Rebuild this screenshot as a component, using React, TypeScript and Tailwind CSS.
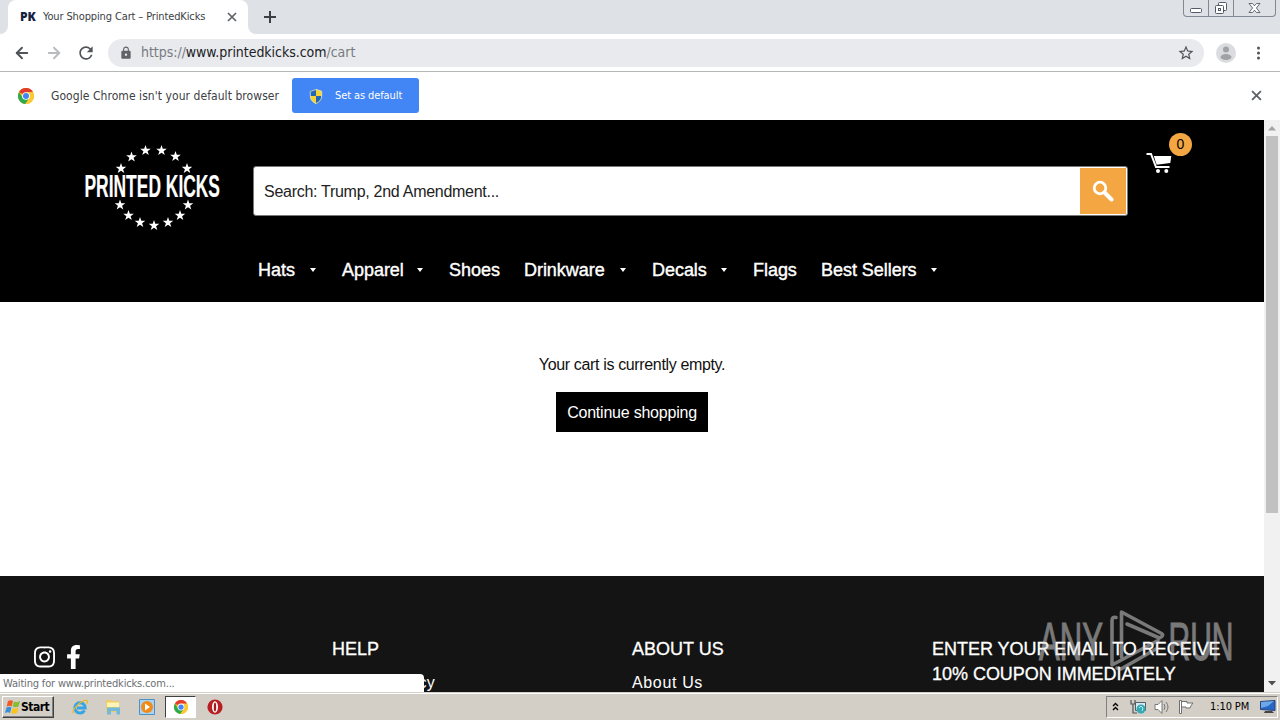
import type { ReactNode } from "react"
import { ArrowLeft, ArrowRight } from "lucide-react"
import { FaFacebookF, FaInstagram } from "react-icons/fa"
import { MdLock, MdRefresh, MdStarBorder } from "react-icons/md"

const stars = [
  [145.5, 150.5], [161.5, 150.5], [131.5, 157], [175.5, 156.5], [121, 168.5], [187, 168.5], [120, 205],
  [188, 205], [128.5, 215.5], [180, 215.5], [140, 222.5], [168, 222.5], [154, 225.5],
]

const navItems = [
  { label: "Hats", width: "w-[37px]", menu: true },
  { label: "Apparel", width: "w-[60px]", menu: true },
  { label: "Shoes", width: "w-[51px]", menu: false },
  { label: "Drinkware", width: "w-[81px]", menu: true },
  { label: "Decals", width: "w-[54px]", menu: true },
  { label: "Flags", width: "w-[44px]", menu: false },
  { label: "Best Sellers", width: "w-[95px]", menu: true },
]

function ChromeLogo({ className }: { className?: string }) {
  return (
    <svg viewBox="0 0 24 24" className={className}>
      <circle cx="12" cy="12" r="12" fill="#fbc116" />
      <path d="M12 12 1.6 6A12 12 0 0 1 22.4 6Z" fill="#e33b2e" />
      <path d="M1.6 6A12 12 0 0 0 11 24L17 14.8 12 12 7 14.8Z" fill="#2da94f" />
      <path d="M12 6h10.4A12 12 0 0 1 11 24l6.2-9Z" fill="#fcc934" />
      <circle cx="12" cy="12" r="5.8" fill="#fff" />
      <circle cx="12" cy="12" r="4.5" fill="#4285f4" />
    </svg>
  )
}

function Shield() {
  return (
    <svg viewBox="0 0 14 15" className="h-[15px] w-[14px]">
      <path d="M7 0 1 2v5c0 4 3 6.500 6 8Z" fill="#2367b5" />
      <path d="M7 0l6 2v5c0 4-3 6.500-6 8Z" fill="#f6d433" />
      <path d="M1 7h6v8C4 13.500 1 11 1 7Z" fill="#f6d433" />
      <path d="M7 7h6c0 4-3 6.500-6 8Z" fill="#2367b5" />
      <path d="M7 .5 1.300 2.400V7c0 4 2.700 6 5.700 7.500 3-1.500 5.700-3.500 5.700-7.500V2.400Z" fill="none" stroke="#d8dccb" strokeWidth=".9" />
    </svg>
  )
}

function CloseIcon({ className }: { className?: string }) {
  return (
    <svg viewBox="0 0 10 10" className={className}>
      <path d="M1 1l8 8M9 1 1 9" stroke="#5f6368" strokeWidth="1.700" />
    </svg>
  )
}

function TabStrip() {
  return (
    <div className="flex h-[34px] bg-[#dee1e6]">
      <div className="flex w-2 items-end bg-white">
        <div className="h-[34px] w-2 rounded-br-lg bg-[#dee1e6]" />
      </div>
      <div className="flex w-60 items-center rounded-t-lg bg-white pl-3">
        <span className="w-[23px] font-['Open_Sans',sans-serif] text-[12px] font-extrabold text-[#16213f]">PK</span>
        <span className="w-[181px] whitespace-nowrap text-[11px] tracking-[-0.13px] text-[#3c4043]">Your Shopping Cart – PrintedKicks</span>
        <CloseIcon className="ml-[3px] h-[10px] w-[10px]" />
      </div>
      <div className="w-2 bg-white">
        <div className="h-[34px] w-2 rounded-bl-lg bg-[#dee1e6]" />
      </div>
      <svg viewBox="0 0 12 12" className="mt-[11px] ml-2 h-3 w-3">
        <path d="M6 0v12M0 6h12" stroke="#3c4043" strokeWidth="2" />
      </svg>
      <div className="mr-1 ml-auto flex h-[17px] w-[93px] rounded-b-[4px] border border-t-0 border-[#818994]">
        <div className="w-[25px] border-r border-[#818994]">
          <svg viewBox="0 0 24 16" className="h-4 w-6">
            <rect x="6.500" y="8.500" width="11" height="4" rx="1" fill="#fff" stroke="#535b66" />
          </svg>
        </div>
        <div className="w-[25px] border-r border-[#818994]">
          <svg viewBox="0 0 24 16" className="h-4 w-6">
            <rect x="9.500" y="2.500" width="8" height="8" rx="1" fill="#fff" stroke="#535b66" />
            <rect x="6.500" y="5.500" width="8" height="8" rx="1" fill="#fff" stroke="#535b66" />
            <rect x="9.500" y="8.500" width="2" height="2" fill="#fff" stroke="#535b66" />
          </svg>
        </div>
        <svg viewBox="0 0 41 16" className="h-4 w-[41px]">
          <path d="M15 3.500h3.500l2 2.300 2-2.300H26L22.400 8l3.600 4.500h-3.500l-2-2.300-2 2.300H15L18.600 8Z" fill="#fff" stroke="#535b66" strokeWidth=".9" />
        </svg>
      </div>
    </div>
  )
}

function Toolbar() {
  return (
    <div className="flex h-[38px] items-center border-b border-[#b5b6b8] bg-white pl-[13px]">
      <ArrowLeft className="h-[18px] w-[18px] text-[#505459]" strokeWidth={2.5} />
      <ArrowRight className="ml-[14px] h-[18px] w-[18px] text-[#b9bbbe]" strokeWidth={2.5} />
      <MdRefresh className="ml-[13px] h-5 w-5 text-[#505459]" />
      <div className="ml-3 flex h-7 w-[1096px] items-center rounded-full bg-[#e8eaed] pl-[11px]">
        <MdLock className="h-[14px] w-[14px] text-[#5f6368]" />
        <span className="ml-2 whitespace-nowrap text-[14px] tracking-[-0.04px] text-[#777b80]">
          https://<span className="text-[#202124]">www.printedkicks.com</span>/cart
        </span>
        <MdStarBorder className="mr-[9px] ml-auto h-[18px] w-[18px] text-[#505459]" />
      </div>
      <svg viewBox="0 0 20 20" className="ml-3 h-5 w-5">
        <circle cx="10" cy="10" r="10" fill="#dadce0" />
        <circle cx="10" cy="6.500" r="3" fill="#a0a2a5" />
        <ellipse cx="10" cy="14" rx="5.500" ry="3" fill="#a0a2a5" />
      </svg>
      <svg viewBox="0 0 4 14" className="ml-[21px] h-[14px] w-1" fill="#505459">
        <circle cx="1.500" cy="2" r="1.500" />
        <circle cx="1.500" cy="7" r="1.500" />
        <circle cx="1.500" cy="12" r="1.500" />
      </svg>
    </div>
  )
}

function InfoBar() {
  return (
    <div className="flex h-12 items-center bg-white pb-px pl-[18px]">
      <ChromeLogo className="h-4 w-4" />
      <span className="ml-[17px] w-[241px] whitespace-nowrap text-[12px] tracking-[0.06px] text-[#3c4043]">Google Chrome isn't your default browser</span>
      <button className="flex h-[35px] w-[127px] items-center rounded-[3px] bg-[#4285f4] pt-px pl-[17px] text-[11px] tracking-[-0.1px] whitespace-nowrap text-white">
        <Shield />
        <span className="ml-3">Set as default</span>
      </button>
      <CloseIcon className="mr-[18px] ml-auto h-[11px] w-[11px]" />
    </div>
  )
}

function Logo() {
  return (
    <svg viewBox="80 140 145 95" className="mt-5 ml-20 h-[95px] w-[145px]">
      {stars.map(([x, y]) => (
        <path
          key={`${x}-${y}`}
          transform={`translate(${x} ${y})`}
          d="M0-5.500 1.300-1.800 5.300-1.700 2.100.7 3.300 4.500 0 2.200-3.300 4.500-2.100.7-5.300-1.700-1.300-1.800Z"
          fill="#fff"
        />
      ))}
      <text x="84.500" y="197" fontSize="31" fontWeight="700" textLength="135.500" lengthAdjust="spacingAndGlyphs" fill="#fff" stroke="#fff" strokeWidth=".2" className="font-['Liberation_Sans_Narrow','Liberation_Sans',sans-serif]">
        PRINTED KICKS
      </text>
    </svg>
  )
}

function ShopHeader() {
  return (
    <header className="h-[182px] bg-black font-['Liberation_Sans',Arial,sans-serif]">
      <div className="flex h-[126px]">
        <Logo />
        <div className="mt-[46px] ml-7 flex h-[50px] w-[875px] rounded-[3px] border border-[#777] bg-white">
          <span className="flex-1 pl-[10px] text-[16px] leading-[49px] tracking-[-0.28px] text-[#222]">Search: Trump, 2nd Amendment...</span>
          <button className="my-px mr-px flex w-[46px] items-center justify-center bg-[#f4a642]">
            <svg viewBox="0 0 22 22" className="h-[22px] w-[22px]" fill="none" stroke="#fff">
              <circle cx="8" cy="8" r="5.800" strokeWidth="2.800" />
              <path d="m12.500 12.500 7 7" strokeWidth="4" strokeLinecap="round" />
            </svg>
          </button>
        </div>
        <div className="relative ml-[18px] h-[60px] w-12">
          <svg viewBox="0 0 26 22" className="mt-8 h-[22px] w-[26px]" fill="#fff">
            <path d="M.500 2H5l5 13h13.500" fill="none" stroke="#fff" strokeWidth="2" />
            <path d="M7.800 4h17.500l-1 7-13.700 1.700Z" />
            <circle cx="12" cy="19" r="2" />
            <circle cx="20.300" cy="19" r="2" />
          </svg>
          <span className="absolute top-[13px] left-[23px] flex h-[23px] w-[23px] items-center justify-center rounded-full bg-[#f4a642] text-[14px] text-black">0</span>
        </div>
      </div>
      <nav className="flex pl-[258px] text-[18px] leading-[48px] tracking-[-0.04px] text-white">
        {navItems.map((item) => (
          <div key={item.label} className="mr-6 flex items-center">
            <span className={`${item.width} whitespace-nowrap [-webkit-text-stroke:0.4px_white]`}>{item.label}</span>
            {item.menu && (
              <svg viewBox="0 0 6 4" className="mr-[2px] ml-[15px] h-1 w-1.5">
                <path d="M0 0h6L3 4Z" fill="#fff" />
              </svg>
            )}
          </div>
        ))}
      </nav>
    </header>
  )
}

function Watermark() {
  return (
    <svg viewBox="1030 600 220 84" className="absolute top-[480px] left-[1030px] h-[84px] w-[220px] opacity-50">
      <g fill="#ddd" stroke="#ddd" strokeWidth="1.100" fontSize="53" className="font-['Liberation_Sans_Narrow','Liberation_Sans',sans-serif]">
        <text x="1039" y="659.500" textLength="64" lengthAdjust="spacingAndGlyphs">ANY</text>
        <text x="1168.500" y="659.500" textLength="65" lengthAdjust="spacingAndGlyphs">RUN</text>
      </g>
      <path
        d="M1116 617.500q-4-1-4 3V665l46-24.500M1121.500 657V612l40 21.500q3 2-2 4.500L1127 624M1117 668l4 1 35-20"
        fill="none"
        stroke="#ddd"
        strokeWidth="3.600"
        strokeLinejoin="round"
        strokeLinecap="round"
      />
    </svg>
  )
}

function ShopFooter() {
  return (
    <footer className="flex h-[116px] overflow-hidden bg-[#141414] pt-[61px] pl-[33px] font-['Liberation_Sans',Arial,sans-serif] text-[18px] leading-[25px] text-white">
      <div className="flex w-[299px] pt-2">
        <FaInstagram className="h-6 w-[23px]" />
        <FaFacebookF className="ml-[9px] h-6 w-[17px]" />
      </div>
      <div className="w-[300px]">
        <h2 className="[-webkit-text-stroke:0.3px_white]">HELP</h2>
        <p className="mt-2 text-[16px] tracking-[0.25px]">Privacy Policy</p>
      </div>
      <div className="w-[300px]">
        <h2 className="[-webkit-text-stroke:0.3px_white]">ABOUT US</h2>
        <p className="mt-2 text-[16px] tracking-[0.65px]">About Us</p>
      </div>
      <h2 className="w-[310px] tracking-[-0.03px] [-webkit-text-stroke:0.3px_white]">
        ENTER YOUR EMAIL TO RECEIVE
        <br />
        10% COUPON IMMEDIATELY
      </h2>
    </footer>
  )
}

function Scrollbar() {
  return (
    <div className="flex w-4 flex-col items-center justify-between bg-[#f1f1f1]">
      <svg viewBox="0 0 16 16" className="h-4 w-4">
        <path d="M4 10.500 8 6l4 4.500Z" fill="#a3a3a3" />
      </svg>
      <div className="mb-auto h-[377px] w-3 bg-[#c1c1c1]" />
      <svg viewBox="0 0 16 16" className="h-4 w-4">
        <path d="M4 5h8l-4 4.500Z" fill="#505050" />
      </svg>
    </div>
  )
}

function TaskIcon({ children }: { children: ReactNode }) {
  return <svg viewBox="0 0 16 16" className="h-4 w-4">{children}</svg>
}

function WindowsFlag() {
  return (
    <TaskIcon>
      <path d="M3 2q3-1.500 5 0L6.700 7.500q-2-1.500-5 0Z" fill="#ef5b25" />
      <path d="M9 2.500q3 1.500 6-.5l-1.500 5.500q-3 1.500-5.800 0Z" fill="#83bd32" />
      <path d="M1.500 8.500q3-1.500 5 0L5 14q-2-1.500-5 0Z" fill="#3a8fdc" />
      <path d="M7.500 9q3 1.500 6-.5L12 14q-3 1.500-6 0Z" fill="#fbc21b" />
    </TaskIcon>
  )
}

function Taskbar() {
  return (
    <div className="flex h-7 items-center border-t border-[#d4d0c8] bg-[#d4cfc6] shadow-[inset_0_1px_0_#fff]">
      <button className="ml-[2px] flex h-[22px] w-[52px] items-center border border-t-white border-r-[#404040] border-b-[#404040] border-l-white pl-[2px] text-[12px] font-bold tracking-[-0.5px] text-black shadow-[inset_-1px_-1px_0_#808080]">
        <WindowsFlag />
        <span>Start</span>
      </button>
      <div className="ml-[18px] flex items-center">
        <TaskIcon>
          <path d="M12.500 11.500a5.200 5.200 0 1 1 .7-2.500H5" fill="none" stroke="#36a5e3" strokeWidth="3" />
          <path d="M1.500 14.500C-1 11 10 0 15 1.500q1 1-.5 3.500" fill="none" stroke="#e9b92e" strokeWidth="1.300" />
        </TaskIcon>
        <div className="ml-[17px]">
          <TaskIcon>
            <path d="M1 1h5l1 1h7v11H1Z" fill="#efce69" />
            <path d="M2 3.500h12V8H2Z" fill="#fff3b5" />
            <path d="M2 15.500V8.500h13v7h-3.500v-3.500H6v3.500Z" fill="#72b9dc" />
          </TaskIcon>
        </div>
        <div className="ml-[18px]">
          <TaskIcon>
            <path d="M.5.500h15v15H.5Z" fill="#a9d3f2" stroke="#4d91c5" />
            <circle cx="8" cy="8" r="6" fill="#f28a18" />
            <path d="m6 4.500 5 3.500-5 3.500Z" fill="#fff" />
          </TaskIcon>
        </div>
        <div className="ml-[10px] flex h-[22px] w-[31px] items-center justify-center border border-t-[#404040] border-r-white border-b-white border-l-[#404040] bg-white">
          <ChromeLogo className="h-[14px] w-[14px]" />
        </div>
        <div className="ml-[11px]">
          <TaskIcon>
            <circle cx="8" cy="8" r="7.600" fill="#b81f22" />
            <ellipse cx="8" cy="8" rx="3" ry="5.700" fill="#fff" />
            <ellipse cx="8" cy="8" rx="1.200" ry="4.500" fill="#a51b20" />
          </TaskIcon>
        </div>
      </div>
      <div className="mr-[2px] ml-auto flex h-[22px] w-[172px] items-center border border-t-[#808080] border-r-white border-b-white border-l-[#808080] pl-[5px]">
        <svg viewBox="0 0 7 10" className="h-[10px] w-[7px]">
          <path d="m1 4 2.500-2.500L6 4M1 8l2.500-2.500L6 8" fill="none" stroke="#000" strokeWidth="1.400" />
        </svg>
        <div className="ml-[11px]">
          <TaskIcon>
            <path d="M5.500 3.500h10v8h-10Z" fill="#d9e8ee" stroke="#51616b" />
            <path d="M1 1v4h4V1M3 5v9h4" fill="none" stroke="#555" strokeWidth="1.200" />
            <circle cx="11" cy="10" r="4.500" fill="#34a9b4" />
            <path d="m9 9 2-2 2 2-1 3" fill="none" stroke="#b5f3ef" />
          </TaskIcon>
        </div>
        <div className="ml-2">
          <TaskIcon>
            <path d="M1 5.500h3l4-4v13l-4-4H1Z" fill="#fff" stroke="#777" />
            <path d="M10 5q2 3 0 6M12 3q4 5 0 10" fill="none" stroke="#777" />
          </TaskIcon>
        </div>
        <div className="ml-2">
          <TaskIcon>
            <path d="M1.500 1.500h2v13h-2ZM3.500 2.500h5.500v1.500h6q-2 2-3 5h-4v-1H3.500Z" fill="#fff" stroke="#707070" />
          </TaskIcon>
        </div>
        <span className="mt-0.5 ml-4 w-[50px] text-[11px] tracking-[-0.1px] whitespace-nowrap text-black">1:10 PM</span>
        <TaskIcon>
          <path d="M.5 2.500 15 1.500v10l-14.500-1Z" fill="#2866c5" stroke="#27457a" />
          <path d="m1 3 13-1-6 5-7 2Z" fill="#6da9e8" />
          <path d="M5 12h7l2 2H4Z" fill="#444" />
        </TaskIcon>
      </div>
    </div>
  )
}

export default function App() {
  return (
    <div className="flex h-[720px] w-[1280px] flex-col overflow-hidden bg-white font-['DejaVu_Sans_Condensed','DejaVu_Sans',sans-serif]">
      <TabStrip />
      <Toolbar />
      <InfoBar />
      <div className="relative flex h-[572px]">
        <div className="w-[1264px]">
          <ShopHeader />
          <main className="flex h-[274px] flex-col items-center pt-[50px] font-['Liberation_Sans',Arial,sans-serif] text-[16px] text-[#111]">
            <p className="leading-[25px] tracking-[-0.35px]">Your cart is currently empty.</p>
            <button className="mt-[15px] h-10 w-[152px] bg-black pt-0.5 tracking-[-0.22px] whitespace-nowrap text-white">Continue shopping</button>
          </main>
          <ShopFooter />
        </div>
        <Scrollbar />
        <Watermark />
        <div className="absolute bottom-0 left-0 h-[18px] w-[424px] rounded-tr bg-white pl-[3px] text-[11px] leading-[19px] tracking-[-0.17px] text-[#6c6f73]">Waiting for www.printedkicks.com...</div>
      </div>
      <Taskbar />
    </div>
  )
}
